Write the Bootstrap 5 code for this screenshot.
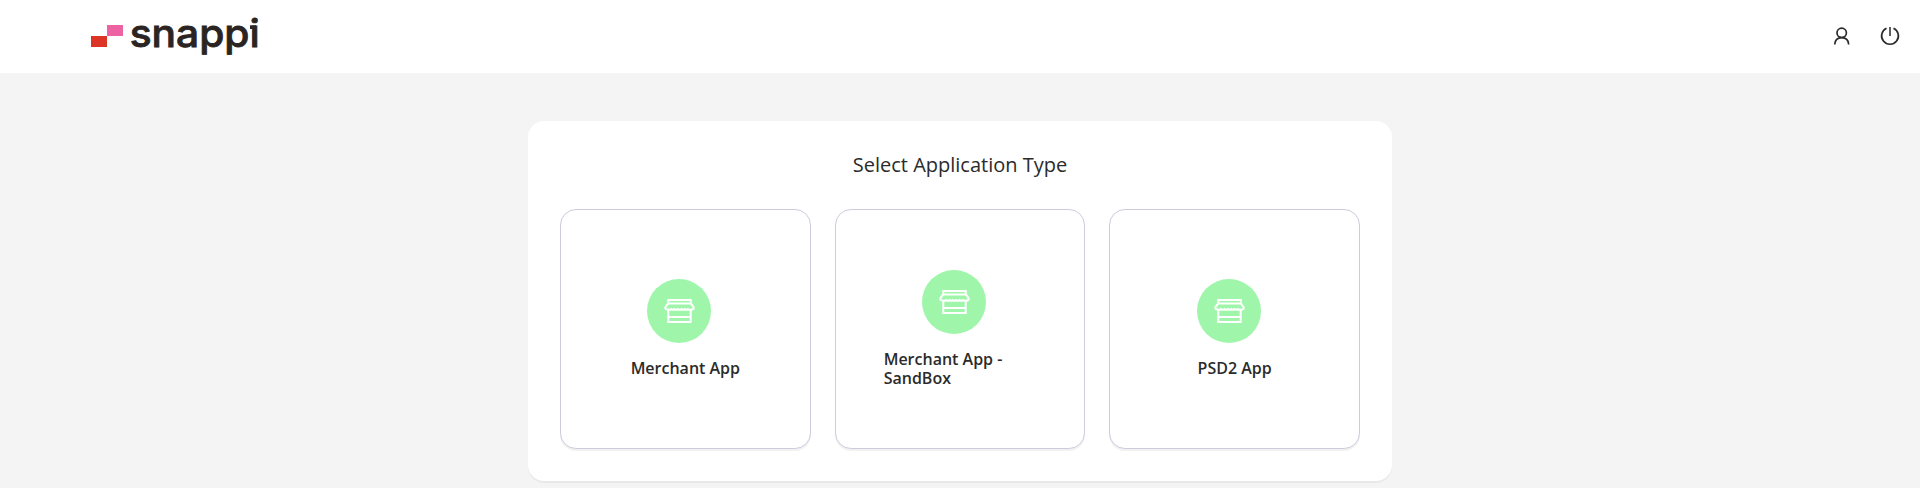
<!DOCTYPE html>
<html lang="en">
<head>
<meta charset="utf-8">
<meta name="viewport" content="width=device-width, initial-scale=1">
<title>snappi</title>
<link rel="stylesheet" href="https://cdn.jsdelivr.net/npm/bootstrap@5.3.0/dist/css/bootstrap.min.css">
<style>
body{font-family:"Open Sans","Noto Sans",sans-serif;background:#f4f4f4;color:#2b2b2b;min-height:488px;overflow:hidden}
.topbar{height:73px;padding:0 16px 0 90px}
.actions{gap:20px;padding-bottom:1px}
.panel{width:864px;margin-top:48px;border-radius:16px;box-shadow:0 2px 0 rgba(0,0,0,.045)}
.panel h1{font-size:20px;line-height:24px;font-weight:400;margin:0 0 32px}
.choices{display:grid;grid-template-columns:repeat(3,1fr);gap:24px}
.choice{height:240px;padding:0 48px;gap:16px;border:1px solid #cfcbdd;border-radius:16px;box-shadow:0 2px 0 rgba(0,0,0,.055);color:inherit;font-size:16px;font-weight:600;line-height:1.2}
.disc{width:64px;height:64px;margin-right:12px;background:#9ff6ab}
</style>
</head>
<body>
<header class="topbar bg-white d-flex align-items-center justify-content-between">
  <a href="#" class="d-block" aria-label="snappi home">
    <svg class="d-block" width="170" height="73" viewBox="90 0 170 73">
      <path fill="#ed62a3" d="M107 25h16v11h-16z"/>
      <path fill="#dc3526" d="M91 36h16v11H91z"/>
      <text x="129.700" y="46.600" font-family="Inter, sans-serif" font-size="38.500" font-weight="500" fill="#2a2422" stroke="#2a2422" stroke-width=".8" textLength="130" lengthAdjust="spacingAndGlyphs">snappi</text>
      <path fill="#2a2422" d="M250 25.300h6V29h-6z"/>
    </svg>
  </a>
  <nav class="actions d-flex align-items-center">
    <a href="#" class="d-block" aria-label="Profile"><svg class="d-block" width="28" height="28" viewBox="1828 22 28 28" fill="none" stroke="#2b2b2b" stroke-width="1.7"><circle cx="1841.700" cy="32.800" r="4.700"/><path d="M1834.700 44.500C1835 40 1837.900 37.600 1841.700 37.600S1848.400 40 1848.700 44.500"/></svg></a>
    <a href="#" class="d-block" aria-label="Log out"><svg class="d-block" width="28" height="28" viewBox="1876 22 28 28" fill="none" stroke="#2b2b2b" stroke-width="1.7"><path d="M1886.500 28.200A8.400 8.400 0 1 0 1893.500 28.200"/><path stroke="#625c5c" stroke-width="2" d="M1890 27v9"/></svg></a>
  </nav>
</header>

<svg class="d-none">
  <symbol id="store" viewBox="0 0 32 32">
    <g fill="none" stroke="#fff" stroke-width="2">
      <path d="M5.300 8.600V5.100h22.500v3.500M5.300 8.400h22.500"/>
      <path d="M5.200 8.400L2.300 12.300Q2 14.600 4.900 14.600Q6.500 15.200 8 14.100Q9.800 15.400 11.400 14.100Q13.200 15.400 14.800 14.100Q16.600 15.400 18.200 14.100Q20 15.400 21.600 14.100Q23.400 15.400 25 14.100Q26.700 15.300 28.200 14.600Q31.100 14.600 30.700 12.300L27.900 8.400"/>
      <path d="M5.300 14.500v12.500h22.400V14.500M5.300 22h22.400"/>
    </g>
  </symbol>
</svg>

<main class="d-flex justify-content-center">
  <section class="panel bg-white p-4">
    <div class="p-2">
      <h1 class="text-center">Select Application Type</h1>
      <div class="choices">
        <a href="#" class="choice bg-white d-flex flex-column align-items-center justify-content-center text-decoration-none">
          <span class="disc rounded-circle d-flex align-items-center justify-content-center"><svg width="32" height="32"><use href="#store"/></svg></span>
          <span>Merchant App</span>
        </a>
        <a href="#" class="choice bg-white d-flex flex-column align-items-center justify-content-center text-decoration-none">
          <span class="disc rounded-circle d-flex align-items-center justify-content-center"><svg width="32" height="32"><use href="#store"/></svg></span>
          <span>Merchant App - SandBox</span>
        </a>
        <a href="#" class="choice bg-white d-flex flex-column align-items-center justify-content-center text-decoration-none">
          <span class="disc rounded-circle d-flex align-items-center justify-content-center"><svg width="32" height="32"><use href="#store"/></svg></span>
          <span>PSD2 App</span>
        </a>
      </div>
    </div>
  </section>
</main>
<script src="https://cdn.jsdelivr.net/npm/bootstrap@5.3.0/dist/js/bootstrap.bundle.min.js"></script>
</body>
</html>
